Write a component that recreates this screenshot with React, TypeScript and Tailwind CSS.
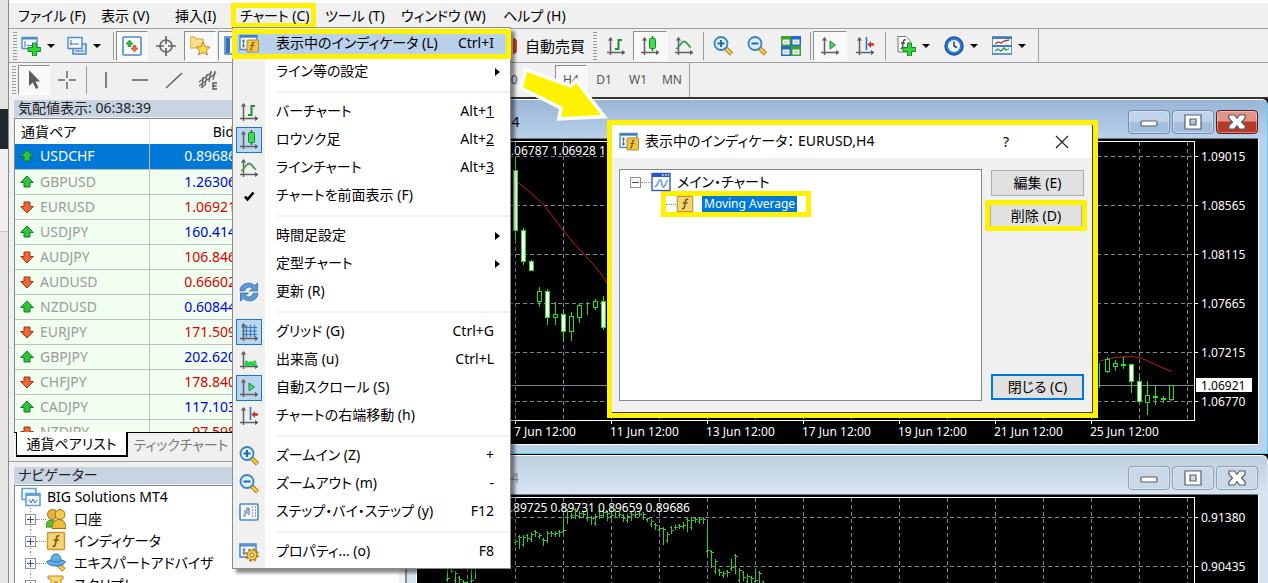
import clsx from "clsx";
import { Fragment, type ReactNode } from "react";

const FONT =
  "font-['Noto_Sans','Noto_Sans_CJK_JP',sans-serif] [font-feature-settings:'palt']";

type IconProps = { className?: string };

function Svg({ className, children }: { className?: string; children: ReactNode }) {
  return (
    <svg
      viewBox="0 0 20 20"
      fill="none"
      aria-hidden="true"
      className={clsx("size-5 shrink-0", className)}
    >
      {children}
    </svg>
  );
}

function Axes() {
  return (
    <g stroke="#5f5f5f" strokeWidth="1.5">
      <path d="M4.5 2v17M1 16.500h16" />
      <path d="M2.500 4.500 4.500 1.500l2 3M16 14.500l3 2-3 2" strokeWidth="1" fill="#5f5f5f" />
    </g>
  );
}

const BarsIcon = (p: IconProps) => (
  <Svg {...p}>
    <Axes />
    <path d="M12.500 3v11M12.500 4H16M9 13h3.500" stroke="#1f8f35" strokeWidth="2" />
  </Svg>
);

const CandleIcon = (p: IconProps) => (
  <Svg {...p}>
    <Axes />
    <path d="M12.500 0v15" stroke="#15802b" strokeWidth="1.5" />
    <rect x="9.500" y="2.500" width="6" height="10" rx="1" fill="#3ddc4f" stroke="#128a2a" />
  </Svg>
);

const LineIcon = (p: IconProps) => (
  <Svg {...p}>
    <Axes />
    <path d="M2 13C6 11 7 5.500 10 5.500S14 10 17 11.500" stroke="#4c9a56" strokeWidth="1.8" />
  </Svg>
);

const GridIcon = (p: IconProps) => (
  <Svg {...p}>
    <Axes />
    <path d="M7.500 3v12M11.500 3v12M15.500 3v12M3 5.500h15M3 9h15M3 12.500h15" stroke="#3c78bd" strokeWidth="1.2" />
  </Svg>
);

const VolumeIcon = (p: IconProps) => (
  <Svg {...p}>
    <Axes />
    <path d="M5.500 16v-4l2-2 2 2 2-1 2 1 2-2 2 2v4z" fill="#2fd04a" />
  </Svg>
);

const AutoScrollIcon = (p: IconProps) => (
  <Svg {...p}>
    <Axes />
    <path d="m10 5 5.500 4-5.500 4z" fill="#4fd864" stroke="#1b8b34" />
  </Svg>
);

const ShiftIcon = (p: IconProps) => (
  <Svg {...p}>
    <Axes />
    <path d="M11.500 1v13" stroke="#2a74bd" strokeWidth="1.6" />
    <path d="M12.500 8.500 16 5v2.200h3v2.600h-3V12z" fill="#c63a1e" />
  </Svg>
);

function Magnifier({ plus, className }: IconProps & { plus?: boolean }) {
  return (
    <Svg className={className}>
      <path d="m12.500 12 6 6" stroke="#a97a12" strokeWidth="4.500" />
      <path d="m13 12.500 5.200 5.200" stroke="#f3d04f" strokeWidth="2.500" />
      <circle cx="8" cy="7.500" r="6.500" fill="#d8f0fd" stroke="#3f80bf" strokeWidth="1.800" />
      <path d="M4.500 7.500h7" stroke="#2468ac" strokeWidth="2" />
      {plus && <path d="M8 4v7" stroke="#2468ac" strokeWidth="2" />}
    </Svg>
  );
}

const StepIcon = (p: IconProps) => (
  <Svg {...p}>
    <rect x="1" y="2" width="18" height="16" rx="1" fill="#f4faff" stroke="#4d8bc6" strokeWidth="1.600" />
    <path d="M4 14h2V8M8 12V6h2M10 6v7" stroke="#5f7f9f" strokeWidth="1.200" />
    <path d="M13 5h1M16 5h1M13 8h1M16 8h1M13 11h1M16 11h1M13 14h1M16 14h1" stroke="#5f7f9f" strokeWidth="1.500" />
  </Svg>
);

function PropertiesIcon(p: IconProps) {
  return (
    <Svg {...p}>
      <rect x="1" y="2" width="16" height="13" fill="#f4faff" stroke="#4d8bc6" strokeWidth="1.600" />
      <path d="M1 3.500h16" stroke="#4d8bc6" strokeWidth="2" />
      <path d="M5 6v7M3.500 8h3M3.500 11h3" stroke="#4d6f94" strokeWidth="1.200" />
      <circle cx="13" cy="13" r="5.500" stroke="#a67a1c" strokeWidth="2.500" strokeDasharray="2.400 1.900" />
      <circle cx="13" cy="13" r="4.800" fill="#f1cb4c" stroke="#b98a20" />
      <circle cx="13" cy="13" r="1.800" fill="#fff" stroke="#a67a1c" />
    </Svg>
  );
}

const IndicatorIcon = (p: IconProps) => (
  <Svg {...p}>
    <rect x="1" y="1.500" width="17" height="14" fill="#f4faff" stroke="#4d8bc6" strokeWidth="1.400" />
    <path d="M1 2.500h17" stroke="#3f7fc0" strokeWidth="2.400" />
    <path d="M4.500 5.500v8M3 7h3M3 12h3" stroke="#4d6f94" strokeWidth="1.200" />
    <rect x="8" y="6" width="11.500" height="12" rx="1" fill="#f0c547" stroke="#b58a23" />
    <path d="M15.500 8.500c-2-.8-2 1-2.300 3.500s-.7 4.300-2.200 3.500M11.500 11.500h4" stroke="#7b5a10" strokeWidth="1.200" />
  </Svg>
);

const FunctionIcon = (p: IconProps) => (
  <Svg {...p}>
    <rect x="1.500" y="1.500" width="17" height="17" rx="1" fill="#f3d575" stroke="#c59a35" strokeWidth="1.400" />
    <path d="M13.500 5c-2.500-1-3 .8-3.500 5s-1.200 6-3.500 5M7.500 9h5.500" stroke="#7b5a10" strokeWidth="1.700" />
  </Svg>
);

const RefreshIcon = (p: IconProps) => (
  <Svg {...p}>
    <path d="M1 9C1 1 11-1 15.500 3.500L18.500 1v8h-8l3-2.800C10.500 4 7 5 6 8.500z" fill="#5c9bd6" stroke="#2c6cab" strokeWidth=".8" />
    <path d="M19 11c0 8-10 10-14.500 5.500L1.500 19v-8h8l-3 2.800C9.500 16 13 15 14 11.500z" fill="#5c9bd6" stroke="#2c6cab" strokeWidth=".8" />
  </Svg>
);

const CheckIcon = (p: IconProps) => (
  <Svg {...p}>
    <path d="M6 10.500 8.500 13.500 14.500 6.500" stroke="#000" strokeWidth="2.600" />
  </Svg>
);

const Plus = () => (
  <path d="M11.500 7h4v4.500H20v4h-4.500V20h-4v-4.500H7v-4h4.500z" fill="#35d13f" stroke="#128a22" />
);

const NewChartIcon = (p: IconProps) => (
  <Svg {...p}>
    <rect x="1" y="1.500" width="15" height="11" fill="#f1f8ff" stroke="#4d8bc6" strokeWidth="1.400" />
    <path d="M1 2.500h15" stroke="#4d8bc6" strokeWidth="2" />
    <path d="M4 5v6M6 9.500h8" stroke="#4d6f94" />
    <Plus />
  </Svg>
);

const ProfilesIcon = (p: IconProps) => (
  <Svg {...p}>
    <path d="M6 8h13v10H6z" fill="#d4e8fa" stroke="#4d8bc6" strokeWidth="1.600" />
    <path d="M1 1.500h14v11H1z" fill="#f1f8ff" stroke="#4d8bc6" strokeWidth="1.400" />
    <path d="M4 4v5M3 8h9M8 15h9" stroke="#4d6f94" />
  </Svg>
);

const MarketWatchIcon = (p: IconProps) => (
  <Svg {...p}>
    <rect x="1" y="1" width="18" height="18" rx="1" fill="#fff" stroke="#4d8bc6" strokeWidth="1.600" />
    <path d="m7.500 4 3.500 4H9v2.500H6V8H4z" fill="#2fb83f" stroke="#147a25" strokeWidth=".6" />
    <path d="m12.500 16-3.500-4h2V9.500h3V12h2z" fill="#f06a3c" stroke="#b3361a" strokeWidth=".6" />
  </Svg>
);

const TargetIcon = (p: IconProps) => (
  <Svg {...p}>
    <circle cx="10" cy="10" r="6" stroke="#666" strokeWidth="1.700" />
    <path d="M10 0v8M10 12v8M0 10h8M12 10h8" stroke="#666" strokeWidth="1.700" />
  </Svg>
);

const FavoritesIcon = (p: IconProps) => (
  <Svg {...p}>
    <path d="M0 1h5l1 2h7v9H0z" fill="#f8e08a" stroke="#c9a13a" />
    <path d="m13 6 2 4.500 5 .5-3.700 3.300L17.500 19 13 16.500 8.500 19l1.200-4.700L6 11l5-.5z" fill="#fbd84f" stroke="#b98a20" />
  </Svg>
);

const TerminalIcon = (p: IconProps) => (
  <Svg {...p}>
    <rect x="1" y="1" width="18" height="17" fill="#fff" stroke="#4d8bc6" strokeWidth="1.600" />
    <path d="M2 2h4v15H2z" fill="#3272b5" />
    <path d="M8 5h9M8 9h9M8 13h9" stroke="#4d6f94" />
  </Svg>
);

const TileIcon = (p: IconProps) => (
  <Svg {...p}>
    <path d="M0 0h10v10H0z" fill="#3ba12c" />
    <path d="M10 0h10v10H10z" fill="#2b68c4" />
    <path d="M0 10h10v10H0z" fill="#2b68c4" />
    <path d="M10 10h10v10H10z" fill="#3ba12c" />
    <path d="M1.500 3.500h7v5h-7zM11.500 3.500h7v5h-7zM1.500 13.500h7v5h-7zM11.500 13.500h7v5h-7z" fill="#e8f3ee" />
    <path d="M3 6h4M13 6h4M3 16h4M13 16h4" stroke="#9db8c9" />
  </Svg>
);

const AddIndicatorIcon = (p: IconProps) => (
  <Svg {...p}>
    <path d="M2 .5h8l4 4V16H2z" fill="#fff" stroke="#777" />
    <path d="M10 4C7.500 3 7.500 5 7 8s-.5 5-2.500 4.500M5 7h4" stroke="#444" strokeWidth="1.300" />
    <Plus />
  </Svg>
);

const ClockIcon = (p: IconProps) => (
  <Svg {...p}>
    <circle cx="10" cy="10" r="9" fill="#2e79cb" stroke="#1a5296" strokeWidth="1.400" />
    <circle cx="10" cy="10" r="6" fill="#eef6fd" />
    <path d="M10 5.500V10l3 1.500" stroke="#333" strokeWidth="1.400" />
  </Svg>
);

const TemplateIcon = (p: IconProps) => (
  <Svg {...p}>
    <rect x="0" y="1" width="20" height="17" fill="#f4faff" stroke="#3f7fc0" strokeWidth="1.600" />
    <path d="M0 2h20M0 10h20" stroke="#3f7fc0" strokeWidth="1.800" />
    <path d="m3 8 3-2 3 1 3-2 5-1" stroke="#b3361a" strokeWidth="1.300" />
    <path d="m3 15 3-2 3 2 3-3 2 2 3-1" stroke="#1f8f35" strokeWidth="1.300" />
  </Svg>
);

const PointerIcon = (p: IconProps) => (
  <Svg {...p}>
    <path d="M5 0v16l3.700-3.500L12 19l2.500-1.300-3-6.200H16z" fill="#5c5c5c" />
  </Svg>
);

const CrosshairIcon = (p: IconProps) => (
  <Svg {...p}>
    <path d="M10 1v7M10 12v7M1 10h7M12 10h7" stroke="#666" strokeWidth="1.500" />
  </Svg>
);

const strokeIcon = (d: string) => (p: IconProps) => (
  <Svg {...p}>
    <path d={d} stroke="#666" strokeWidth="1.600" />
  </Svg>
);
const VLineIcon = strokeIcon("M10 2v16");
const HLineIcon = strokeIcon("M2 10h16");
const TrendIcon = strokeIcon("M2 18 18 3");

const ChannelIcon = (p: IconProps) => (
  <Svg {...p}>
    <path d="m1 12 13-10M1 16 18 3M3 18l5-4M5 7l-1 11M9 4 7 15M13 1l-2 11M17 1l-2 9" stroke="#666" strokeWidth="1.300" />
    <path d="M19 13h-4v6h4M15 16h3.500" stroke="#555" strokeWidth="1.400" />
  </Svg>
);

const AccountsIcon = (p: IconProps) => (
  <Svg {...p}>
    <path d="M0 18c0-5 2-7 5-7s5 2 5 7z" fill="#59c234" stroke="#2f8a18" />
    <circle cx="6.500" cy="5.500" r="5" fill="#e6b23a" stroke="#9a6d12" />
    <circle cx="14" cy="5.500" r="5" fill="#f1c84c" stroke="#9a6d12" />
    <path d="M6 19.500c0-6 3-9 7-9s7 3 7 9z" fill="#efb93a" stroke="#9a6d12" />
  </Svg>
);

const ExpertIcon = (p: IconProps) => (
  <Svg {...p}>
    <path d="m12 11 6 6" stroke="#b98a20" strokeWidth="5" />
    <path d="m12 11 5.500 5.500" stroke="#f3cf4e" strokeWidth="3" />
    <path d="M5 7c0-8 10-8 10 0l4.500 1.500c-2 6-17 6-19 0z" fill="#62b1e6" stroke="#2b6fae" />
    <path d="M5 7.500c3 2 7 2 10 0" stroke="#2b6fae" />
  </Svg>
);

const ScriptIcon = (p: IconProps) => (
  <Svg {...p}>
    <path d="M2 1h15v3h-2v13H5V4H2z" fill="#f6d873" stroke="#b98a20" />
    <path d="M8 7h4M8 10h4" stroke="#a67a1c" />
  </Svg>
);

const TerminalTreeIcon = (p: IconProps) => (
  <Svg {...p}>
    <path d="M1 1.500h14v11H1z" fill="#f1f8ff" stroke="#64a0da" strokeWidth="1.600" />
    <path d="M5 6.500h14v12H5z" fill="#f1f8ff" stroke="#64a0da" strokeWidth="1.600" />
    <path d="M5 8h14" stroke="#64a0da" strokeWidth="2" />
    <path d="m8 12 2 4 2-4 2 4 2-3" stroke="#4d6f94" />
  </Svg>
);

const MainChartIcon = (p: IconProps) => (
  <Svg {...p}>
    <rect x="1" y="1.500" width="18" height="17" fill="#fff" stroke="#2a5ec4" strokeWidth="1.400" />
    <path d="M1 3h18" stroke="#2456c8" strokeWidth="4" />
    <path d="M11 3h1.500M14 3h1.500M17 3h1" stroke="#fff" strokeWidth="1.500" />
    <path d="M3.500 14c3 2 3.500-6 5.500-6s1.500 7 3.500 7 2-6 4.500-7" stroke="#7da0dc" strokeWidth="1.800" />
  </Svg>
);

function Direction({ up }: { up: boolean }) {
  return (
    <svg viewBox="0 0 14 14" aria-hidden="true" className="size-3.5 shrink-0">
      {up ? (
        <path d="M7 1 13.300 7.500H10V12H4V7.500H.7z" fill="#2fc440" stroke="#157a25" />
      ) : (
        <path d="M7 13 .7 6.500H4V2h6v4.500h3.300z" fill="#f0653a" stroke="#9e3315" />
      )}
    </svg>
  );
}

// ---------- tool bars ----------

function Grip() {
  return (
    <span className="mx-0.5 h-7 w-1 shrink-0 bg-[repeating-linear-gradient(#9a9a9a_0_1px,transparent_1px_3px)]" />
  );
}

function Tool({
  label,
  pressed,
  menu,
  className,
  children,
}: {
  label: string;
  pressed?: boolean;
  menu?: boolean;
  className?: string;
  children: ReactNode;
}) {
  return (
    <button
      type="button"
      aria-label={label}
      aria-pressed={pressed}
      className={clsx(
        "flex h-[30px] shrink-0 items-center gap-1.5",
        menu ? "justify-start pl-0.5" : "justify-center",
        pressed && "border border-r-white border-b-white border-l-[#8c8c8c] border-t-[#8c8c8c] bg-[#f8f8f8]",
        className ?? (menu ? "w-[46px]" : "w-[34px]")
      )}
    >
      {children}
      {menu && <span className="border-x-4 border-t-4 border-x-transparent border-t-black" />}
    </button>
  );
}

const Divider = () => <span className="mx-0.5 h-7 w-px shrink-0 bg-[#9a9a9a]" />;

function MainToolbar() {
  return (
    <div className="flex h-[34px] items-center border-b border-[#a0a0a0]">
      <div className="flex w-[504px] shrink-0 items-center overflow-hidden pl-0.5">
        <Grip />
        <Tool label="新規チャート" menu><NewChartIcon /></Tool>
        <Tool label="プロファイル" menu><ProfilesIcon /></Tool>
        <Divider />
        <Tool label="気配値表示" pressed className="w-8"><MarketWatchIcon /></Tool>
        <Tool label="データウィンドウ" className="w-9"><TargetIcon /></Tool>
        <Tool label="ナビゲーター" pressed className="w-8"><FavoritesIcon /></Tool>
        <Tool label="ターミナル" pressed className="ml-0.5 w-8"><TerminalIcon /></Tool>
      </div>
      <div className="flex h-full shrink-0 items-center border-r border-[#a0a0a0] pr-0.5">
        <button type="button" className="flex w-[78px] shrink-0 items-center gap-2 text-[15px] leading-5">
          <span className="h-4 w-1 shrink-0 rounded-r-full bg-[#d2452a]" />
          自動売買
        </button>
        <Grip />
        <Tool label="バーチャート"><BarsIcon /></Tool>
        <Tool label="ロウソク足" pressed><CandleIcon /></Tool>
        <Tool label="ラインチャート"><LineIcon /></Tool>
        <Divider />
        <Tool label="ズームイン"><Magnifier plus /></Tool>
        <Tool label="ズームアウト"><Magnifier /></Tool>
        <Tool label="整列"><TileIcon /></Tool>
        <Divider />
        <Tool label="自動スクロール" pressed><AutoScrollIcon /></Tool>
        <Tool label="チャートの右端移動" className="w-9"><ShiftIcon /></Tool>
        <Divider />
        <div className="flex gap-0.5 pl-1.5">
          <Tool label="インディケータ" menu><AddIndicatorIcon /></Tool>
          <Tool label="時間足設定" menu><ClockIcon /></Tool>
          <Tool label="定型チャート" menu><TemplateIcon /></Tool>
        </div>
      </div>
    </div>
  );
}

function LineToolbar() {
  const periods = ["D1", "W1", "MN"];
  return (
    <div className="flex h-[34px] items-center">
      <div className="flex w-[484px] shrink-0 items-center pl-px">
        <Grip />
        <Tool label="カーソル" pressed className="w-8"><PointerIcon /></Tool>
        <Tool label="十字カーソル"><CrosshairIcon /></Tool>
        <Divider />
        <Tool label="垂直線"><VLineIcon /></Tool>
        <Tool label="水平線"><HLineIcon /></Tool>
        <Tool label="トレンドライン"><TrendIcon /></Tool>
        <Tool label="チャネル"><ChannelIcon /></Tool>
      </div>
      <div className="flex h-full shrink-0 items-center border-r border-[#a0a0a0] text-xs text-[#555]">
        <button type="button" className="w-[34px] pr-3 text-center">M30</button>
        <span className="w-7" />
        <button type="button" className="h-[30px] w-8 border border-r-white border-b-white border-l-[#8c8c8c] border-t-[#8c8c8c] bg-[#f8f8f8]">
          H4
        </button>
        {periods.map((period) => (
          <button key={period} type="button" className="w-[34px]">
            {period}
          </button>
        ))}
      </div>
    </div>
  );
}

// ---------- left dock ----------

const quotes = [
  { symbol: "USDCHF", bid: "0.89686", up: true },
  { symbol: "GBPUSD", bid: "1.26306", up: true },
  { symbol: "EURUSD", bid: "1.06921", up: false },
  { symbol: "USDJPY", bid: "160.414", up: true },
  { symbol: "AUDJPY", bid: "106.846", up: false },
  { symbol: "AUDUSD", bid: "0.66602", up: false },
  { symbol: "NZDUSD", bid: "0.60844", up: true },
  { symbol: "EURJPY", bid: "171.509", up: false },
  { symbol: "GBPJPY", bid: "202.620", up: true },
  { symbol: "CHFJPY", bid: "178.840", up: false },
  { symbol: "CADJPY", bid: "117.103", up: true },
  { symbol: "NZDJPY", bid: "97.598", up: false },
];

function PanelTitle({ children }: { children: ReactNode }) {
  return <h2 className="h-[17px] bg-[#c8d4e1] pl-1 text-sm leading-4 text-[#222]">{children}</h2>;
}

function MarketWatch() {
  return (
    <section className="mt-[3px] pl-[5px]">
      <PanelTitle>気配値表示: 06:38:39</PanelTitle>
      <div className="mt-px h-[314px] overflow-hidden border-l border-t border-[#828790] bg-white">
        <table className="w-full table-fixed border-collapse text-sm">
          <thead>
            <tr className="h-[25px]">
              <th className="w-[134px] border-r border-[#e0e0e0] pl-1.5 text-left font-normal">通貨ペア</th>
              <th className="w-[93px] pr-2 text-right font-normal">Bid</th>
              <th className="font-normal">Ask</th>
            </tr>
          </thead>
          <tbody>
            {quotes.map(({ symbol, bid, up }, i) => (
              <tr
                key={symbol}
                className={clsx(
                  "h-[25px] border-b border-[#bdbdbd]",
                  i === 0 ? "bg-[#0078d7] text-white" : "bg-[#f0fff0]"
                )}
              >
                <td className={clsx("border-r border-[#bdbdbd]", i > 0 && "text-[#9b9b9b]")}>
                  <span className="flex items-center gap-1.5 pl-[5px]">
                    <Direction up={up} />
                    {symbol}
                  </span>
                </td>
                <td className={clsx("pr-1.5 text-right", i > 0 && (up ? "text-[#0000e0]" : "text-[#d80000]"))}>
                  {bid}
                </td>
                <td />
              </tr>
            ))}
          </tbody>
        </table>
      </div>
      <div className="flex h-[29px] items-start border-t border-black text-sm">
        <button type="button" className="-mt-px ml-0.5 h-[25px] w-28 border border-b-2 border-r-2 border-t-0 border-black bg-white">
          通貨ペアリスト
        </button>
        <button type="button" className="h-[23px] w-[106px] text-[#7a7a7a]">
          ティックチャート
        </button>
      </div>
    </section>
  );
}

const navItems = [
  { name: "口座", Icon: AccountsIcon },
  { name: "インディケータ", Icon: FunctionIcon },
  { name: "エキスパートアドバイザ", Icon: ExpertIcon },
  { name: "スクリプト", Icon: ScriptIcon },
];

function ExpandBox({ open }: { open?: boolean }) {
  return (
    <svg viewBox="0 0 11 11" aria-hidden="true" className="size-[11px] shrink-0" shapeRendering="crispEdges">
      <rect x=".5" y=".5" width="10" height="10" fill="#fff" stroke="#919191" />
      <path d="M2 5.500h7" stroke="#34519a" />
      {!open && <path d="M5.500 2v7" stroke="#34519a" />}
    </svg>
  );
}

function Navigator() {
  return (
    <section className="flex min-h-0 flex-1 flex-col border-t border-[#a0a0a0] pl-[5px] pt-[5px]">
      <PanelTitle>ナビゲーター</PanelTitle>
      <div className="mt-px min-h-0 flex-1 overflow-hidden border-l border-t border-[#828790] bg-white text-sm leading-[22px]">
        <div className="flex items-center gap-1.5 pl-1.5">
          <TerminalTreeIcon />
          BIG Solutions MT4
        </div>
        <ul>
          {navItems.map(({ name, Icon }) => (
            <li key={name} className="flex h-[22px] items-center pl-2.5">
              <span className="flex h-full w-[11px] items-center bg-[repeating-linear-gradient(#8a8a8a_0_1px,transparent_1px_3px)] bg-[length:1px_100%] bg-center bg-no-repeat">
                <ExpandBox />
              </span>
              <span className="w-2.5 border-t border-dotted border-[#8a8a8a]" />
              <Icon className="mr-2" />
              {name}
            </li>
          ))}
        </ul>
      </div>
    </section>
  );
}

// ---------- chart windows ----------

// [x, high, low, body top, body bottom, filled]
const candles: [number, number, number, number, number, boolean][] = [
  [515, 155, 241, 170, 230, true],
  [523, 227, 264, 230, 261, true],
  [531, 259, 270, 261, 270, true],
  [539, 286, 306, 291, 301, false],
  [547, 288, 324, 291, 317, true],
  [555, 301, 324, 314, 317, false],
  [563, 308, 341, 314, 331, true],
  [571, 311, 340, 316, 331, false],
  [579, 303, 322, 305, 317, false],
  [587, 301, 314, 307, 307, false],
  [595, 298, 309, 301, 307, false],
  [603, 295, 329, 301, 327, true],
  [1099, 362, 387, 370, 370, false],
  [1107, 356, 372, 359, 371, false],
  [1115, 359, 370, 363, 366, false],
  [1123, 356, 368, 364, 365, false],
  [1131, 364, 392, 364, 381, true],
  [1139, 375, 402, 381, 401, true],
  [1147, 380, 414, 395, 402, false],
  [1155, 385, 404, 396, 397, false],
  [1163, 395, 402, 398, 399, false],
  [1171, 384, 400, 385, 399, false],
];

// [high, low] of consecutive bars
const barsLeft = [[566, 581], [568, 572], [570, 582], [575, 582], [579, 583], [580, 583], [566, 583], [562, 578], [556, 568]];
const bars = [
  [538, 544], [534, 548], [534, 546], [533, 541], [531, 541], [529, 536], [532, 538], [537, 545], [530, 542],
  [530, 536], [530, 536], [529, 536], [516, 533], [508, 523], [512, 518], [507, 518], [510, 518], [511, 517],
  [510, 520], [515, 524], [513, 525], [509, 518], [509, 517], [510, 520], [509, 518], [508, 516], [511, 517],
  [513, 521], [513, 522], [511, 520], [510, 517], [511, 516], [511, 519], [517, 521], [518, 526], [522, 529],
  [524, 531], [526, 544], [531, 542], [525, 533], [524, 529], [523, 528], [521, 528], [517, 531], [517, 529],
  [516, 522], [516, 523], [516, 523], [521, 553], [549, 567], [558, 573], [568, 575], [570, 577], [569, 576],
  [558, 570], [553, 573], [567, 582], [570, 580], [573, 583], [575, 583], [570, 583], [570, 583], [580, 583],
];

const gridX = Array.from({ length: 16 }, (_, i) => 467 + i * 48);

function Grid({ rows, top, bottom }: { rows: number[]; top: number; bottom: number }) {
  return (
    <g stroke="#7f8892" strokeDasharray="4 3">
      {gridX.map((x) => (
        <path key={x} d={`M${x} ${top}V${bottom}`} />
      ))}
      {rows.map((y) => (
        <path key={y} d={`M417 ${y}H1194`} />
      ))}
    </g>
  );
}

function PriceScale({ prices }: { prices: [string, number][] }) {
  return (
    <>
      {prices.map(([price, y]) => (
        <Fragment key={price}>
          <path d={`M1194 ${y + 0.5}h4`} stroke="#fff" />
          <text x="1201" y={y + 5} fill="#fff">
            {price}
          </text>
        </Fragment>
      ))}
    </>
  );
}

function EurUsdChart() {
  const prices: [string, number][] = [
    ["1.09015", 156],
    ["1.08565", 205],
    ["1.08115", 254],
    ["1.07665", 303],
    ["1.07215", 352],
    ["1.06770", 401],
  ];
  const dates: [string, number][] = [
    ["7 Jun 12:00", 515],
    ["11 Jun 12:00", 611],
    ["13 Jun 12:00", 707],
    ["17 Jun 12:00", 803],
    ["19 Jun 12:00", 899],
    ["21 Jun 12:00", 995],
    ["25 Jun 12:00", 1091],
  ];
  return (
    <svg viewBox="417 139 841 305" className="block w-full bg-black text-xs" shapeRendering="crispEdges">
      <g transform="translate(.5 .5)">
        <Grid rows={prices.map(([, y]) => y)} top={141} bottom={420} />
        <path d="M417 385H1194" stroke="#7f8892" />
        <path d="M417 141H1194V420H417" fill="none" stroke="#fff" />
        <g fill="none" stroke="#c8201c" shapeRendering="auto">
          <path d="M515 180C530 192 540 200 547 209S565 234 580 250s20 22 27 33" />
          <path d="M1098 361C1110 357 1125 355 1139 357 1150 361 1160 367 1171 371" />
        </g>
        {candles.map(([x, high, low, top, bottom, filled]) => (
          <g key={x} stroke="#25e025">
            <path d={`M${x} ${high}V${low}`} />
            <rect x={x - 2} y={top} width="4" height={bottom - top} fill={filled ? "#fff" : "#000"} />
          </g>
        ))}
      </g>
      <text x="691" y="155" fill="#fff" textAnchor="end">
        EURUSD,H4 1.06791 1.06787 1.06928 1.06780 1.06921
      </text>
      <PriceScale prices={prices} />
      <rect x="1196" y="378" width="56" height="14" fill="#fff" />
      <text x="1201" y="390" fill="#000">
        1.06921
      </text>
      {dates.map(([date, x]) => (
        <Fragment key={date}>
          <path d={`M${x + 0.5} 420v4`} stroke="#fff" />
          <text x={x - 1} y="436" fill="#fff">
            {date}
          </text>
        </Fragment>
      ))}
    </svg>
  );
}

function UsdChfChart() {
  const prices: [string, number][] = [
    ["0.91380", 517],
    ["0.90435", 566],
  ];
  const bar = (x: number, high: number, low: number, i: number) => (
    <path
      key={x}
      d={`M${x} ${high}V${low}M${x - 2} ${i % 2 ? high + 2 : low - 2}h2M${x} ${i % 3 ? high + 3 : low - 3}h2`}
    />
  );
  return (
    <svg viewBox="417 495 841 305" className="block w-full bg-black text-xs" shapeRendering="crispEdges">
      <g transform="translate(.5 .5)">
        <Grid rows={[517, 566, 615]} top={497} bottom={776} />
        <path d="M417 497H1194V776H417" fill="none" stroke="#fff" />
        <g stroke="#35c935">
          {barsLeft.map(([high, low], i) => bar(447 + i * 4, high, low, i))}
          {bars.map(([high, low], i) => bar(515 + i * 4, high, low, i))}
        </g>
      </g>
      <text x="690" y="512" fill="#fff" textAnchor="end">
        USDCHF,H4 0.89725 0.89731 0.89659 0.89686
      </text>
      <PriceScale prices={prices} />
    </svg>
  );
}

function CaptionButton({
  label,
  active,
  danger,
  children,
}: {
  label: string;
  active?: boolean;
  danger?: boolean;
  children: ReactNode;
}) {
  return (
    <button
      type="button"
      aria-label={label}
      className={clsx(
        "flex h-6 w-[42px] items-center justify-center rounded-sm border shadow-[inset_0_0_0_1px_rgb(255_255_255/0.4)]",
        danger
          ? "border-[#5c1a1a] bg-linear-to-b from-[#e0948a] from-45% to-[#b93a26] to-50%"
          : active
            ? "border-[#6f8bad] bg-linear-to-b from-[#bfd3ea] from-45% to-[#a4bedd] to-55%"
            : "border-[#8c9db5] bg-[#c9d7e6]"
      )}
    >
      <svg viewBox="0 0 18 16" aria-hidden="true" className="h-4 w-[18px]" fill="#fff" stroke="#555f6e" strokeWidth="1.200">
        {children}
      </svg>
    </button>
  );
}

function ChartWindow({
  title,
  active,
  children,
}: {
  title: string;
  active?: boolean;
  children: ReactNode;
}) {
  return (
    <section
      className={clsx(
        "rounded-t-md border-t border-white",
        active
          ? "border-b border-r border-b-[#54d3ea] border-r-[#54d3ea] bg-[#b9d1ea] pb-2"
          : "border-r border-r-[#d7e4f2] bg-[#d7e4f2]"
      )}
    >
      <header
        className={clsx(
          "flex h-[38px] items-start justify-between rounded-t-md pl-3 pr-[9px]",
          active
            ? "bg-linear-to-b from-[#9ab5d5] to-[#b9d1ea]"
            : "bg-linear-to-b from-[#bfcfdf] to-[#d7e4f2] text-[#8492a5]"
        )}
      >
        <span className="flex items-center gap-1 pt-3 text-sm leading-5">
          <CandleIcon className="size-4" />
          {title}
        </span>
        <span className="flex gap-0.5 pt-2.5">
          <CaptionButton label="最小化" active={active}>
            <rect x="1" y="7" width="16" height="5" rx="1" />
          </CaptionButton>
          <CaptionButton label="最大化" active={active}>
            <path d="M1 1h16v14H1zM6 5v6h6V5z" fillRule="evenodd" />
          </CaptionButton>
          <CaptionButton label="閉じる" active={active} danger={active}>
            <path d="M1 1h5.500L9 4.300 11.500 1H17v3.500L13.500 8l3.500 3.500V15h-5.500L9 11.700 6.500 15H1v-3.500L4.500 8 1 4.500z" />
          </CaptionButton>
        </span>
      </header>
      <div className="ml-[9px] mr-2 border border-white border-t-[#6b7683]">{children}</div>
    </section>
  );
}

// ---------- チャート menu ----------

type MenuEntry = {
  label: string;
  Icon?: (p: IconProps) => ReactNode;
  keys?: string;
  access?: string;
  sub?: boolean;
  on?: boolean;
};

const menuGroups: MenuEntry[][] = [
  [
    { label: "表示中のインディケータ (L)", Icon: IndicatorIcon, keys: "Ctrl+I" },
    { label: "ライン等の設定", sub: true },
  ],
  [
    { label: "バーチャート", Icon: BarsIcon, keys: "Alt+", access: "1" },
    { label: "ロウソク足", Icon: CandleIcon, keys: "Alt+", access: "2", on: true },
    { label: "ラインチャート", Icon: LineIcon, keys: "Alt+", access: "3" },
    { label: "チャートを前面表示 (F)", Icon: CheckIcon },
  ],
  [
    { label: "時間足設定", sub: true },
    { label: "定型チャート", sub: true },
    { label: "更新 (R)", Icon: RefreshIcon },
  ],
  [
    { label: "グリッド (G)", Icon: GridIcon, keys: "Ctrl+G", on: true },
    { label: "出来高 (u)", Icon: VolumeIcon, keys: "Ctrl+L" },
    { label: "自動スクロール (S)", Icon: AutoScrollIcon, on: true },
    { label: "チャートの右端移動 (h)", Icon: ShiftIcon },
  ],
  [
    { label: "ズームイン (Z)", Icon: (p) => <Magnifier plus {...p} />, keys: "+" },
    { label: "ズームアウト (m)", Icon: (p) => <Magnifier {...p} />, keys: "-" },
    { label: "ステップ・バイ・ステップ (y)", Icon: StepIcon, keys: "F12" },
  ],
  [{ label: "プロパティ... (o)", Icon: PropertiesIcon, keys: "F8" }],
];

function ChartMenu() {
  return (
    <div
      role="menu"
      className="absolute left-[232px] top-[27px] w-[279px] border border-[#8a8a8a] bg-[linear-gradient(90deg,#f0f0f0_32px,#fff_32px)] py-0.5 text-sm shadow-[4px_4px_3px_rgb(0_0_0/0.45)]"
    >
      {menuGroups.map((group, g) => (
        <div key={g}>
          {g > 0 && <hr className="my-[5px] ml-11 h-0.5 border-t-0 bg-[#f0f0f0]" />}
          {group.map(({ label, Icon, keys, access, sub, on }, i) => (
            <button
              key={label}
              type="button"
              role="menuitem"
              className={clsx(
                "flex h-7 w-full items-center pr-4 text-left",
                g === 0 && i === 0 && "bg-[#b9d1ea] outline-5 -outline-offset-4 outline-[#fff200]"
              )}
            >
              <span
                className={clsx(
                  "ml-[3px] flex size-[26px] items-center justify-center border",
                  on ? "border-[#1a78cc] bg-[#b9d6ee]" : "border-transparent"
                )}
              >
                {Icon && <Icon />}
              </span>
              <span className="ml-3.5 flex-1 whitespace-nowrap pb-0.5">{label}</span>
              {keys && (
                <kbd className="pb-0.5 font-['Noto_Sans',sans-serif] text-sm">
                  {keys}
                  {access && <u>{access}</u>}
                </kbd>
              )}
              {sub && <span className="-mr-1.5 border-y-4 border-l-5 border-y-transparent border-l-black" />}
            </button>
          ))}
        </div>
      ))}
    </div>
  );
}

// ---------- indicator list dialog ----------

function IndicatorDialog() {
  const button = "h-[26px] w-full border bg-[#e1e1e1] text-sm";
  return (
    <div
      role="dialog"
      aria-labelledby="dialog-title"
      className="absolute left-[607px] top-[120px] w-[491px] border-5 border-[#fff200] bg-[#f0f0f0]"
    >
      <div className="border-b border-r border-[#3a3a2a]">
        <header className="flex h-[33px] items-center gap-1.5 bg-white pl-[7px] pr-[23px] text-sm">
          <IndicatorIcon />
          <h2 id="dialog-title" className="flex-1 pb-0.5">
            表示中のインディケータ： EURUSD,H4
          </h2>
          <button type="button" aria-label="ヘルプ" className="mr-10">
            ?
          </button>
          <button type="button" aria-label="閉じる">
            <svg viewBox="0 0 14 14" className="size-3.5" stroke="#222" strokeWidth="1.200">
              <path d="m1 1 12 12M13 1 1 13" />
            </svg>
          </button>
        </header>
        <div className="flex gap-[9px] py-[11px] pl-[7px] pr-2">
          <div className="h-[232px] flex-1 border border-[#828790] bg-white pl-2.5 text-sm">
            <div className="flex h-6 items-center">
              <ExpandBox open />
              <span className="w-2.5 border-t border-dotted border-[#8a8a8a]" />
              <MainChartIcon className="mr-1.5" />
              メイン・チャート
            </div>
            <div className="-mt-[3px] ml-[31px] flex h-[26px] w-[150px] items-center border-5 border-[#fff200]">
              <span className="w-2.5 border-t border-dotted border-[#8a8a8a]" />
              <FunctionIcon className="mr-2 size-[18px]" />
              <span className="bg-[#0078d7] px-0.5 text-xs leading-4 text-white">Moving Average</span>
            </div>
          </div>
          <div className="flex w-[93px] flex-col">
            <button type="button" className={clsx(button, "mt-px border-[#adadad]")}>
              編集 (E)
            </button>
            <div className="-ml-1.5 -mr-[3px] mt-1 border-5 border-[#fff200]">
              <button type="button" className="block h-[21px] w-full border-x border-[#adadad] bg-[#e1e1e1] text-sm">
                削除 (D)
              </button>
            </div>
            <button type="button" className={clsx(button, "mb-px mt-auto border-2 border-[#0078d7]")}>
              閉じる (C)
            </button>
          </div>
        </div>
      </div>
    </div>
  );
}

const menus = ["ファイル (F)", "表示 (V)", "挿入(I)", "チャート (C)", "ツール (T)", "ウィンドウ (W)", "ヘルプ (H)"];

export default function App() {
  return (
    <div className={clsx("relative flex h-screen overflow-hidden bg-[#f0f0f0] text-black", FONT)}>
      <div className="flex w-[9px] shrink-0 flex-col border-r border-[#8a8a8a]">
        <div className="h-[109px] bg-[#e3e3e3]" />
        <div className="h-10 bg-[#20262e]" />
        <div className="h-[83px] border-b border-[#c8c8c8] bg-[#efefef]" />
        <div className="flex-1 bg-[#e6e6e6]" />
      </div>
      <div className="flex min-w-0 flex-1 flex-col border-t-3 border-white">
        <nav className="grid h-[26px] grid-cols-[83px_74px_65px_85px_76px_102px_80px] items-center border-b border-[#a0a0a0] text-sm leading-4">
          {menus.map((menu) => (
            <button
              key={menu}
              type="button"
              className={clsx(
                "h-[25px] whitespace-nowrap text-left",
                menu.startsWith("チャート") ? "border-5 border-[#fff200] pl-1" : "pl-[9px]"
              )}
            >
              {menu}
            </button>
          ))}
        </nav>
        <MainToolbar />
        <LineToolbar />
        <div className="flex min-h-0 flex-1">
          <aside className="flex w-[398px] shrink-0 flex-col border-r-2 border-[#8a8a8a] pr-1.5">
            <MarketWatch />
            <Navigator />
          </aside>
          <main className="flex min-w-0 flex-1 flex-col gap-px overflow-hidden border-t-2 border-[#333] bg-black">
            <ChartWindow title="EURUSD,H4" active>
              <EurUsdChart />
            </ChartWindow>
            <ChartWindow title="USDCHF,H4">
              <UsdChfChart />
            </ChartWindow>
          </main>
        </div>
      </div>
      <ChartMenu />
      <IndicatorDialog />
      <svg viewBox="0 0 100 60" aria-hidden="true" className="absolute left-[515px] top-[66px] h-[60px] w-[100px]">
        <path
          d="m12 6 44 16 5-5 25 32-40 2 2-10L8 21z"
          fill="#fff200"
          stroke="#fff"
          strokeWidth="7"
          paintOrder="stroke"
        />
      </svg>
    </div>
  );
}
